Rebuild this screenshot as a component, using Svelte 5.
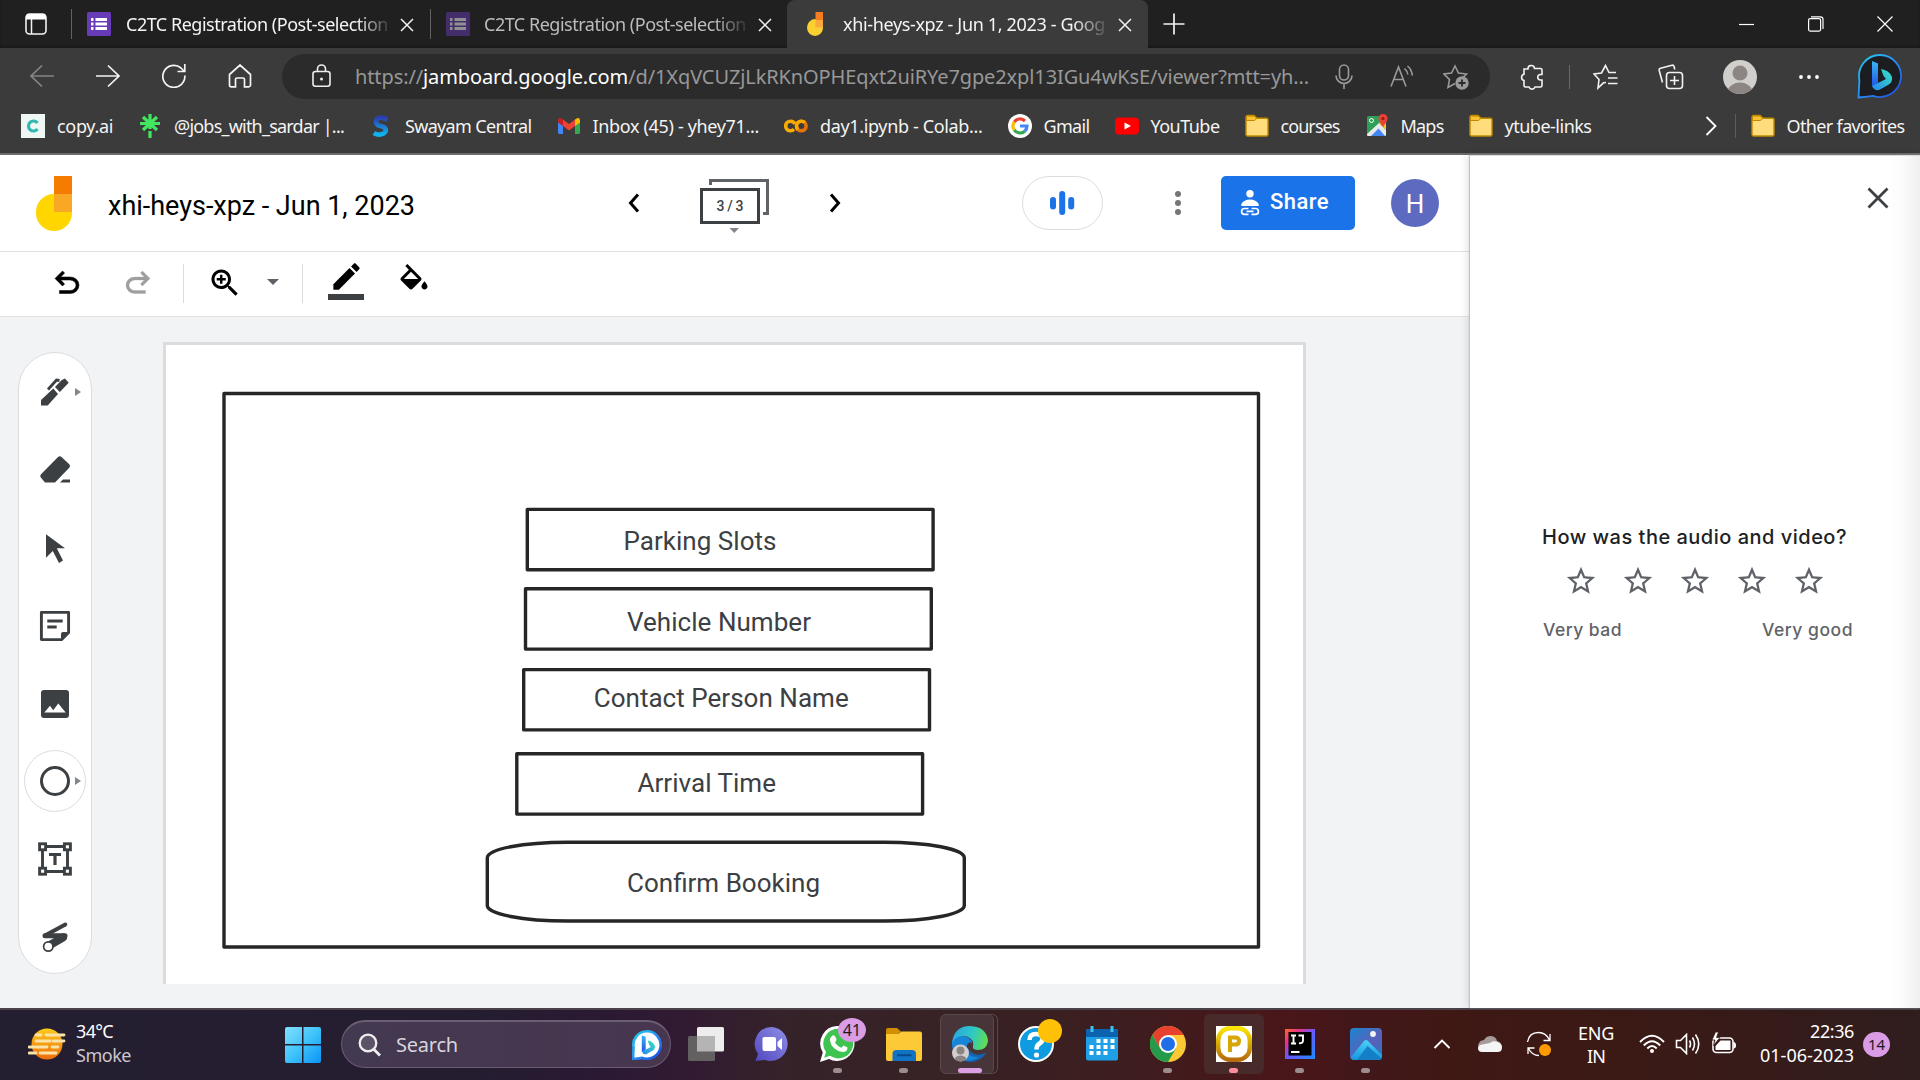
<script>
  // Spreads a label's letters so it fills the given width.
  function fit(node, width) {
    const natural = node.getBoundingClientRect().width;
    node.style.letterSpacing = `${(width - natural) / node.textContent.length}px`;
  }

  const tabs = [
    { title: 'C2TC Registration (Post-selection', dim: false },
    { title: 'C2TC Registration (Post-selection', dim: true },
  ];

  const bookmarks = [
    { icon: 'copy', text: 'copy.ai', w: 56 },
    { icon: 'tree', text: '@jobs_with_sardar |...', w: 170 },
    { icon: 'swayam', text: 'Swayam Central', w: 126.5 },
    { icon: 'gmail', text: 'Inbox (45) - yhey71...', w: 166.5 },
    { icon: 'colab', text: 'day1.ipynb - Colab...', w: 162.5 },
    { icon: 'google', text: 'Gmail', w: 46 },
    { icon: 'youtube', text: 'YouTube', w: 69 },
    { icon: 'folder', text: 'courses', w: 59 },
    { icon: 'maps', text: 'Maps', w: 43 },
    { icon: 'folder', text: 'ytube-links', w: 87 },
  ];

  const tools = ['pen', 'eraser', 'select', 'note', 'image', 'circle', 'text', 'laser'];

  const boxes = [
    { x: 527.3, y: 509.4, tx: 623.5, ty: 550, tw: 153, label: 'Parking Slots' },
    { x: 525.5, y: 588.8, tx: 627, ty: 631, tw: 184, label: 'Vehicle Number' },
    { x: 523.7, y: 669.6, tx: 593.7, ty: 707, tw: 255, label: 'Contact Person Name' },
    { x: 516.8, y: 753.8, tx: 637.5, ty: 792, tw: 138.5, label: 'Arrival Time' },
  ];

  const apps = [
    { name: 'taskview' },
    { name: 'chat' },
    { name: 'whatsapp', mark: 'dot' },
    { name: 'files', mark: 'dot' },
    { name: 'edge', mark: 'active' },
    { name: 'help' },
    { name: 'calendar' },
    { name: 'chrome', mark: 'dot' },
    { name: 'p', mark: 'alert' },
    { name: 'ij', mark: 'dot' },
    { name: 'photos', mark: 'dot' },
  ];
</script>

{#snippet bing(size)}
  <svg width={size} height={size} viewBox="0 0 46 46">
    <defs>
      <linearGradient id="bRing" x1="0" y1="0" x2="1" y2="1"><stop offset="0" stop-color="#1fd0ee" /><stop offset=".5" stop-color="#2b8df2" /><stop offset="1" stop-color="#1b48e0" /></linearGradient>
      <linearGradient id="bStem" x1="0" y1="0" x2="0" y2="1"><stop offset="0" stop-color="#37b8f5" /><stop offset="1" stop-color="#2251e8" /></linearGradient>
      <linearGradient id="bBowl" x1="1" y1="0" x2="0" y2="1"><stop offset="0" stop-color="#35e5c0" /><stop offset="1" stop-color="#2a86f0" /></linearGradient>
    </defs>
    <path d="M1.5 44.5 L2.4 27 A21 21 0 1 1 16 42.8 Q8 44 1.5 44.5Z" fill={size > 40 ? '#1c1d20' : '#fff'} stroke="url(#bRing)" stroke-width={size > 40 ? 1.8 : 4} />
    <path d="M15 8 L21 10.5 V30 L15 34Z" fill="url(#bStem)" />
    <path d="M24 16 Q32 17 35 24 Q36 29 31 32 L22 37 Q17 38 15 33 L29 26 L26.5 23Z" fill="url(#bBowl)" />
  </svg>
{/snippet}

{#snippet closeX(s)}
  <svg class="x" width={s} height={s} viewBox="0 0 14 14"><path d="M1 1 L13 13 M13 1 L1 13" fill="none" stroke="#f2f2f2" stroke-width="1.5" /></svg>
{/snippet}

{#snippet folder()}
  <svg width="24" height="24" viewBox="0 0 24 24"><path d="M1 20.5V3a1.5 1.5 0 0 1 1.500-1.500H9L12 4.300H21.500A1.500 1.500 0 0 1 23 5.800V20.500A1.500 1.500 0 0 1 21.500 22H2.500A1.500 1.500 0 0 1 1 20.500Z" fill="#ffdc7c" stroke="#c08a00" stroke-width="1.400" /><path d="M1.500 6.500V3A1 1 0 0 1 2.500 2H9L11.800 4.500L9.500 6.500Z" fill="#f9c12f" stroke="#c08a00" /></svg>
{/snippet}

<div class="screen">
  <div class="tabbar">
    <svg class="workspaces" width="22" height="22" viewBox="0 0 22 22"><rect x="1" y="1" width="20" height="20" rx="3.500" fill="none" stroke="#f2f2f2" stroke-width="1.600" /><path d="M1 6.500V4A3 3 0 0 1 4 1H18A3 3 0 0 1 21 4V6.500Z" fill="#fff" /><path d="M6.500 6V21" stroke="#f2f2f2" stroke-width="1.500" /></svg>
    {#each tabs as tab}
      <div class="tab" class:dim={tab.dim}>
        <svg class="favicon" width="24" height="24" viewBox="0 0 24 24"><rect width="24" height="24" rx="1.500" fill="#673ab7" /><path d="M4 7.500H6.500M4 12H6.500M4 16.500H6.500M8.500 7.500H20M8.500 12H20M8.500 16.500H20" stroke="#fff" stroke-width="2.800" /></svg>
        <div class="tab-title"><span use:fit={262}>{tab.title}</span></div>
        {@render closeX(14)}
      </div>
    {/each}
    <div class="tab active">
      <svg class="favicon" width="24" height="24" viewBox="0 0 24 24"><path d="M3 15.500A8.500 8.500 0 0 1 11.500 7H19V15.500A8 8.500 0 0 1 3 15.500Z" fill="#fbd132" /><path d="M11.500 0H19V8H11.500Z" fill="#f57c1f" /><path d="M11.500 8H19V15.500H11.500Z" fill="#fba93c" /></svg>
      <div class="tab-title"><span use:fit={262}>xhi-heys-xpz - Jun 1, 2023 - Goog</span></div>
      {@render closeX(14)}
    </div>
    <svg class="newtab" width="22" height="22" viewBox="0 0 22 22"><path d="M11 .5V21.500M.5 11H21.500" stroke="#f2f2f2" stroke-width="1.700" /></svg>
    <div class="window-buttons">
      <svg width="16" height="16" viewBox="0 0 16 16"><path d="M0 8.500H15" stroke="#fff" stroke-width="1.200" /></svg>
      <svg width="16" height="16" viewBox="0 0 16 16"><rect x=".6" y="2.600" width="12" height="12.500" rx="1.500" fill="none" stroke="#fff" stroke-width="1.200" /><path d="M3 .8H12.500A2.500 2.500 0 0 1 15 3.300V13" fill="none" stroke="#fff" stroke-width="1.200" /></svg>
      <svg width="16" height="16" viewBox="0 0 16 16"><path d="M.5 .5L15.500 15.500M15.500 .5L.5 15.500" stroke="#fff" stroke-width="1.200" /></svg>
    </div>
  </div>

  <div class="navbar">
    <div class="nav-buttons">
      <svg width="24" height="24" viewBox="0 0 24 24"><path d="M24 12H1M12 1.500L1 12L12 22.500" /></svg>
      <svg width="24" height="24" viewBox="0 0 24 24"><path d="M0 12H23M12 1.500L23 12L12 22.500" /></svg>
      <svg width="24" height="24" viewBox="0 0 24 24"><path d="M22.800 11.500A11 11 0 1 1 19 4L22.500 7.500M22.800 0V7.500H15.500" /></svg>
      <svg width="24" height="24" viewBox="0 0 24 24"><path d="M1.500 10.500L12 1L22.500 10.500V21A1.800 1.800 0 0 1 20.700 22.800H16.500V15.500Q16.500 14 15 14H9Q7.500 14 7.500 15.500V22.800H3.300A1.800 1.800 0 0 1 1.500 21Z" /></svg>
    </div>
    <div class="address">
      <svg class="lock" width="20" height="24" viewBox="0 0 20 24"><rect x="1" y="7.500" width="17" height="14.800" rx="2.500" fill="none" stroke="#eee" stroke-width="1.600" /><path d="M5.500 7.500V5a4 4 0 0 1 8 0V7.500" fill="none" stroke="#eee" stroke-width="1.600" /><circle cx="9.500" cy="15" r="1.500" fill="#eee" /></svg>
      <div class="url"><span use:fit={954}>https://<b>jamboard.google.com</b>/d/1XqVCUZjLkRKnOPHEqxt2uiRYe7gpe2xpl13IGu4wKsE/viewer?mtt=yh...</span></div>
      <div class="address-icons">
        <svg width="26" height="26" viewBox="0 0 26 26"><rect x="8.500" y="1" width="9" height="15" rx="4.500" /><path d="M5 11.500A8 8 0 0 0 21 11.500M13 19.500V25" /></svg>
        <svg class="read" width="26" height="26" viewBox="0 0 26 26"><path d="M2 22.500L9.500 3L17 22.500M4.800 15.500H14.200M15.500 4.500Q18.500 7 18.800 10.500M18.500 2Q22.800 5.500 23.300 11.500" /></svg>
        <svg width="26" height="26" viewBox="0 0 26 26"><path d="M12 19.500L5 23.500L6.500 15.500L1 10L8.500 9L12 2L15.500 9L23.500 10L20 13.500" /><circle cx="19" cy="19" r="6.700" fill="#9a9a9a" stroke="none" /><path d="M19 15.500V22.500M15.500 19H22.500" stroke="#2b2b2b" stroke-width="1.800" /></svg>
      </div>
    </div>
    <svg class="ext" width="24" height="26" viewBox="0 0 24 26"><path d="M4 5H8A3.200 3.200 0 1 1 14.500 4.500H20.500A1.500 1.500 0 0 1 22 6V10.500H20A2.800 2.800 0 0 0 20 16H22V21.500A1.500 1.500 0 0 1 20.500 23H15A3.200 3.200 0 0 1 9 23H5.500A1.500 1.500 0 0 1 4 21.500V16.500A3.200 3.200 0 0 1 4 10.300Z" fill="none" stroke="#f2f2f2" stroke-width="1.600" /></svg>
    <div class="nav-sep"></div>
    <svg class="favs" width="26" height="26" viewBox="0 0 26 26"><path d="M13 18.500L10.500 18.800L5 24L6 15.500L1 10L8.500 9L12.500 1.500L16 8.500H23M15 14H24.500M15 19.500H24.500" fill="none" stroke="#f2f2f2" stroke-width="1.600" /></svg>
    <svg class="collections" width="26" height="26" viewBox="0 0 26 26"><rect x="8.500" y="8.500" width="16" height="16" rx="3" fill="none" stroke="#f2f2f2" stroke-width="1.600" /><path d="M16.500 12V21M12 16.500H21M4.500 18.500L1.200 6.500Q.8 4.800 2.500 4.300L14 1.200Q15.500 .9 16 2.300L16.800 5.500" fill="none" stroke="#f2f2f2" stroke-width="1.600" /></svg>
    <svg class="profile" width="34" height="34" viewBox="0 0 34 34"><defs><clipPath id="pc"><circle cx="17" cy="17" r="17" /></clipPath></defs><g clip-path="url(#pc)"><rect width="34" height="34" fill="#d1cfcc" /><circle cx="17" cy="13" r="7.500" fill="#8b8683" /><ellipse cx="17" cy="34" rx="13" ry="11.500" fill="#8b8683" /></g></svg>
    <svg class="more" width="22" height="6" viewBox="0 0 22 6"><circle cx="3" cy="3" r="1.900" fill="#fff" /><circle cx="11" cy="3" r="1.900" fill="#fff" /><circle cx="19" cy="3" r="1.900" fill="#fff" /></svg>
    <div class="bing-btn">{@render bing(46)}</div>
  </div>

  <div class="bookmarks">
    {#each bookmarks as b}
      <div class="bookmark">
        {#if b.icon === 'folder'}
          {@render folder()}
        {:else if b.icon === 'copy'}
          <svg width="24" height="24" viewBox="0 0 24 24"><rect width="24" height="24" fill="#eef7f4" /><path d="M16.500 9A5 5 0 1 0 16.500 15" fill="none" stroke="#35b7b0" stroke-width="3.200" /></svg>
        {:else if b.icon === 'tree'}
          <svg width="24" height="24" viewBox="0 0 24 24"><path d="M12 0V15M2 9.500H22M5 3L19 16M19 3L5 16M12 17V24" stroke="#43e660" stroke-width="3.200" /></svg>
        {:else if b.icon === 'swayam'}
          <svg width="24" height="24" viewBox="0 0 24 24"><defs><linearGradient id="sw" x1="0" y1="0" x2="0" y2="1"><stop offset="0" stop-color="#2b3fae" /><stop offset="1" stop-color="#0fb5ee" /></linearGradient></defs><path d="M18.500 5.500Q12 2.500 8.500 4.500Q5 8 9 11L15 13Q19 16.500 14.500 19.500Q10 22 4.800 19" fill="none" stroke="url(#sw)" stroke-width="4.800" /></svg>
        {:else if b.icon === 'gmail'}
          <svg width="24" height="24" viewBox="0 0 24 24"><path d="M1 6V18.500A1.500 1.500 0 0 0 2.500 20H6V9.500Z" fill="#4285f4" /><path d="M23 6V18.500A1.500 1.500 0 0 1 21.500 20H18V9.500Z" fill="#34a853" /><path d="M18 5.500L20 4.200Q23 3.500 23 6.500V8.500L18 12Z" fill="#fbbc04" /><path d="M6 5.500L4 4.200Q1 3.500 1 6.500V8.500L6 12Z" fill="#c5221f" /><path d="M6 5.500L12 10L18 5.500V12L12 16.500L6 12Z" fill="#ea4335" /></svg>
        {:else if b.icon === 'colab'}
          <svg width="24" height="24" viewBox="0 0 24 24"><circle cx="6.500" cy="12" r="4.800" fill="none" stroke="#f9ab00" stroke-width="3.600" stroke-dasharray="24 6" stroke-dashoffset="-3.500" /><circle cx="17.300" cy="12" r="4.800" fill="none" stroke="#e8710a" stroke-width="3.600" /><path d="M20.700 8.600A4.800 4.800 0 0 0 13.900 15.400" fill="none" stroke="#f9ab00" stroke-width="3.600" /></svg>
        {:else if b.icon === 'google'}
          <svg width="24" height="24" viewBox="0 0 24 24"><circle cx="12" cy="12" r="12" fill="#fff" /><g fill="none" stroke-width="3.200"><path d="M17 7A7 7 0 0 0 6.300 8" stroke="#ea4335" /><path d="M6.300 8A7 7 0 0 0 6.300 16" stroke="#fbbc05" /><path d="M6.300 16A7 7 0 0 0 16.700 17.200" stroke="#34a853" /><path d="M16.700 17.200A7 7 0 0 0 19 12H12" stroke="#4285f4" /></g></svg>
        {:else if b.icon === 'youtube'}
          <svg width="24" height="24" viewBox="0 0 24 24"><rect x="0" y="3.500" width="24" height="17" rx="4" fill="#f00" /><path d="M9.500 8.500L16 12L9.500 15.500Z" fill="#fff" /></svg>
        {:else}
          <svg width="24" height="24" viewBox="0 0 24 24"><defs><clipPath id="mapClip"><rect x="2" y="2" width="19" height="20" rx="1.500" /></clipPath></defs><g clip-path="url(#mapClip)"><rect width="24" height="24" fill="#2f9e57" /><path d="M2 22L12 11L22 22Z" fill="#4285f4" /><path d="M14 9L22 17V22H20L13.500 14.500L6 22H2V20Z" fill="#e9e9e9" /><path d="M14 9L16 7H22V17Z" fill="#fbc02d" /></g><circle cx="6.500" cy="6.500" r="2" fill="none" stroke="#fff" /><path d="M18 13Q13.500 7 13.500 4.500A4.500 4.500 0 0 1 22.500 4.500Q22.500 7 18 13Z" fill="#ea4335" /><circle cx="18" cy="4.500" r="1.600" fill="#8c1d14" /></svg>
        {/if}
        <div class="bm-label" style:width="{b.w}px"><span use:fit={b.w}>{b.text}</span></div>
      </div>
    {/each}
    <svg class="bm-more" width="12" height="20" viewBox="0 0 12 20"><path d="M1.500 1L10.500 10L1.500 19" fill="none" stroke="#fff" stroke-width="1.800" /></svg>
    <div class="bm-sep"></div>
    <div class="bookmark">
      {@render folder()}
      <div class="bm-label"><span use:fit={118}>Other favorites</span></div>
    </div>
  </div>

  <div class="page">
    <div class="app">
      <header>
        <svg class="logo" width="36" height="56" viewBox="0 0 36 56"><path d="M0 36A18 18 0 0 1 18 18H36V37A18 18 0 0 1 0 37Z" fill="#ffd600" /><rect x="18" width="18" height="18" fill="#f57c00" /><rect x="18" y="18" width="18" height="18" fill="#f9a825" /></svg>
        <h1><span use:fit={307}>xhi-heys-xpz - Jun 1, 2023</span></h1>
        <svg class="prev" width="14" height="20" viewBox="0 0 14 20"><path d="M11 1.500L3.500 10L11 18.500" fill="none" stroke="#000" stroke-width="3" /></svg>
        <div class="frames">
          <svg width="70" height="56" viewBox="0 0 70 56"><path d="M10.500 6V1.500H67.500V34.500H63" fill="none" stroke="#5f6368" stroke-width="3" /><rect x="1.500" y="10.500" width="57" height="33" fill="#fff" stroke="#3c4043" stroke-width="3" /><path d="M29.500 49H39L34.200 54Z" fill="#80868b" /><text x="16.500" y="31.500" textLength="27">3 / 3</text></svg>
        </div>
        <svg class="next" width="14" height="20" viewBox="0 0 14 20"><path d="M3 1.500L10.500 10L3 18.500" fill="none" stroke="#000" stroke-width="3" /></svg>
        <div class="audio">
          <svg width="26" height="26" viewBox="0 0 26 26"><g fill="#1a73e8"><rect x="1" y="7" width="6" height="12.500" rx="3" /><rect x="10.200" y="1" width="6" height="24" rx="3" /><rect x="19.200" y="7" width="6" height="12.500" rx="3" /></g></svg>
        </div>
        <svg class="kebab" width="8" height="26" viewBox="0 0 8 26"><g fill="#757575"><circle cx="4" cy="4" r="3" /><circle cx="4" cy="13" r="3" /><circle cx="4" cy="22" r="3" /></g></svg>
        <button class="share">
          <svg width="20" height="26" viewBox="0 0 20 26"><circle cx="10" cy="3.800" r="3.700" fill="#fff" /><path d="M1.300 16V14Q4 9.500 10 9.500Q16 9.500 18.700 14V16Z" fill="#fff" /><path d="M8.500 18.500H4.500A2.900 2.900 0 0 0 4.500 24.300H8.500M11.500 18.500H15.500A2.900 2.900 0 0 1 15.500 24.300H11.500M6.500 21.400H13.500" fill="none" stroke="#fff" stroke-width="1.700" /></svg>
          <span use:fit={59}>Share</span>
        </button>
        <div class="account">H</div>
      </header>

      <div class="edit-bar">
        <svg class="undo" width="36" height="36" viewBox="0 -960 960 960"><path d="M280-200v-80h284q63 0 109.500-40T720-420q0-60-46.500-100T564-560H312l104 104-56 56-200-200 200-200 56 56-104 104h252q97 0 166.500 63T800-420q0 94-69.500 157T564-200H280Z" stroke="#000" stroke-width="14" /></svg>
        <svg class="redo" width="36" height="36" viewBox="0 -960 960 960"><path transform="translate(960 0) scale(-1 1)" d="M280-200v-80h284q63 0 109.500-40T720-420q0-60-46.500-100T564-560H312l104 104-56 56-200-200 200-200 56 56-104 104h252q97 0 166.500 63T800-420q0 94-69.500 157T564-200H280Z" fill="#9e9e9e" stroke="#9e9e9e" stroke-width="8" /></svg>
        <div class="bar-sep first"></div>
        <svg class="zoom" width="36" height="36" viewBox="0 0 24 24"><path d="M15.500 14h-.79l-.28-.27C15.410 12.590 16 11.110 16 9.500 16 5.910 13.090 3 9.500 3S3 5.910 3 9.500 5.910 16 9.500 16c1.610 0 3.090-.59 4.230-1.570l.27.28v.79l5 4.990L20.490 19l-4.990-5zm-6 0C7.010 14 5 11.990 5 9.500S7.010 5 9.500 5 14 7.010 14 9.500 11.990 14 9.500 14z" /><path d="M9.500 6.500V12.500M6.500 9.500H12.500" stroke="#000" stroke-width="1.600" /></svg>
        <svg class="caret" width="12" height="6" viewBox="0 0 12 6"><path d="M0 0H12L6 6Z" fill="#5f6368" /></svg>
        <div class="bar-sep second"></div>
        <div class="pen-color">
          <svg width="35" height="35" viewBox="0 0 24 24"><path d="M3 17.250V21h3.750L17.810 9.940l-3.750-3.750L3 17.250z" /><path d="M20.710 7.040c.39-.39.39-1.020 0-1.410l-2.340-2.340c-.39-.39-1.020-.39-1.410 0l-1.830 1.830 3.750 3.750 1.830-1.830z" /></svg>
          <div class="swatch"></div>
        </div>
        <svg class="fill" width="36" height="36" viewBox="0 0 24 24"><path d="M16.560 8.940L7.620 0 6.210 1.410l2.380 2.380-5.150 5.150c-.59.59-.59 1.540 0 2.120l5.500 5.500c.29.29.68.44 1.060.44s.77-.15 1.060-.44l5.500-5.500c.59-.58.59-1.530 0-2.120zM5.210 10L10 5.210 14.790 10H5.210zM19 11.500s-2 2.170-2 3.500c0 1.100.9 2 2 2s2-.9 2-2c0-1.330-2-3.500-2-3.500z" /></svg>
      </div>

      <main>
        <nav class="rail">
          {#each tools as t}
            <div class="tool" class:current={t === 'circle'}>
              <svg width="36" height="36" viewBox="0 0 36 36" fill="#3c4043">
                {#if t === 'pen'}
                  <path d="M4 31.500V26L16.300 14.500L21 20L10.700 31.500ZM18 13L24.800 6L28 4.500L31.700 8.700L22.800 18Z" /><path d="M11 15.500L19.500 6L22.500 6.500" fill="none" stroke="#3c4043" stroke-width="2.800" />
                {:else if t === 'eraser'}
                  <path d="M3.800 22.500L20 6Q22.500 3 25 5.500L32 12Q34 14 32 16L18 30.500H8L3.800 25.500Q2.600 24 3.800 22.500ZM23 30.500L26 27.500H33V30.500Z" />
                {:else if t === 'select'}
                  <path d="M9 4.200L28 18.300H19.800L26 30.500L22 33L15.800 21L9 27.800Z" />
                {:else if t === 'note'}
                  <path d="M4.400 4.400H31.600V24.500L24.500 31.600H4.400Z" fill="none" stroke="#3c4043" stroke-width="2.900" stroke-linejoin="round" /><path d="M24 32V26Q24 24 26 24H32Z" /><path d="M10.300 13H25.700M10.300 19H19.700" stroke="#3c4043" stroke-width="2.900" />
                {:else if t === 'image'}
                  <rect x="4" y="4" width="28" height="28" rx="3" /><path d="M7.300 26.500L13 19.700L16.200 24.200L21.300 17.600L28.700 26.500Z" fill="#fff" />
                {:else if t === 'circle'}
                  <circle cx="18" cy="18" r="13.500" fill="none" stroke="#3c4043" stroke-width="3" />
                {:else if t === 'text'}
                  <g fill="none" stroke="#3c4043" stroke-width="2.900"><path d="M10 5.500H26M10 30.500H26M5.500 10V26M30.500 10V26" /><rect x="2.600" y="2.800" width="6" height="6" /><rect x="27.400" y="2.800" width="6" height="6" /><rect x="2.600" y="27.200" width="6" height="6" /><rect x="27.400" y="27.200" width="6" height="6" /><path d="M12 13.500H24M18 13.500V24" stroke-width="3.200" /></g>
                {:else}
                  <g fill="none" stroke="#3c4043" stroke-linecap="round"><path d="M8 16.500L28.300 5.500" stroke-width="4" /><path d="M8 16.800H28" stroke-width="5" /><path d="M11.300 27L26 18.500" stroke-width="8" /></g><circle cx="11.300" cy="27.500" r="5.500" /><circle cx="11.300" cy="27.500" r="3.800" fill="#fff" />
                {/if}
              </svg>
              {#if t === 'pen' || t === 'circle'}<i class="more-arrow"></i>{/if}
            </div>
          {/each}
        </nav>
        <div class="board">
          <svg width="1137" height="639" viewBox="166 345 1137 639">
            <g fill="none" stroke="#262626" stroke-width="3.400" stroke-linejoin="round">
              <rect x="224" y="393.500" width="1034.500" height="553.500" />
              {#each boxes as b}<rect x={b.x} y={b.y} width="405.800" height="60.300" />{/each}
              <rect x="487.300" y="842.200" width="477" height="78.800" rx="80" ry="15.500" />
            </g>
            {#each boxes as b}<text x={b.tx} y={b.ty} textLength={b.tw}>{b.label}</text>{/each}
            <text x="627" y="892" textLength="193">Confirm Booking</text>
          </svg>
        </div>
      </main>
    </div>

    <aside>
      <svg class="close" width="22" height="22" viewBox="0 0 22 22"><path d="M1.500 1.500L20.500 20.500M20.500 1.500L1.500 20.500" stroke="#3c4043" stroke-width="2.800" /></svg>
      <div class="question"><span use:fit={305}>How was the audio and video?</span></div>
      <div class="stars">
        {#each Array(5) as _}
          <svg width="34" height="34" viewBox="0 0 24 24" fill="#5f6368"><path d="M22 9.240l-7.190-.62L12 2 9.190 8.630 2 9.240l5.460 4.730L5.820 21 12 17.270 18.180 21l-1.630-7.030L22 9.240zM12 15.400l-3.760 2.270 1-4.280-3.320-2.880 4.380-.38L12 6.100l1.710 4.040 4.380.38-3.320 2.880 1 4.280L12 15.400z" /></svg>
        {/each}
      </div>
      <div class="scale"><span use:fit={79}>Very bad</span><span use:fit={91}>Very good</span></div>
    </aside>
  </div>

  <footer>
    <svg class="weather" width="38" height="32" viewBox="0 0 38 32"><defs><linearGradient id="sun" x1="0" y1="0" x2="0" y2="1"><stop offset="0" stop-color="#fccb1b" /><stop offset="1" stop-color="#ef6c0c" /></linearGradient></defs><circle cx="19" cy="16" r="15.500" fill="url(#sun)" /><path d="M8 7H13M18 7H36M8 13H22M25 13H36M1 19H19M24 19H30M1 25H8M12 25H28" stroke="#fbe3a8" stroke-width="2.800" stroke-linecap="round" /></svg>
    <div class="weather-text"><div><span use:fit={37}>34°C</span></div><div class="muted"><span use:fit={55}>Smoke</span></div></div>
    <svg class="start" width="36" height="36" viewBox="0 0 36 36"><defs><linearGradient id="win" x1="0" y1="0" x2="1" y2="1"><stop offset="0" stop-color="#84e0fd" /><stop offset=".5" stop-color="#3fc3fb" /><stop offset="1" stop-color="#0b93f5" /></linearGradient></defs><path d="M2 0H17V17H0V2Q0 0 2 0ZM18.500 0H34Q36 0 36 2V17H18.500ZM0 18.500H17V36H2Q0 36 0 34ZM18.500 18.500H36V34Q36 36 34 36H18.500Z" fill="url(#win)" /></svg>
    <div class="search">
      <svg width="24" height="24" viewBox="0 0 24 24"><circle cx="10" cy="10" r="8.300" fill="#ffffff22" stroke="#eee" stroke-width="2.300" /><path d="M15.500 16L22 22.500" stroke="#eee" stroke-width="2.800" /></svg>
      <div class="search-label"><span use:fit={62}>Search</span></div>
      {@render bing(30)}
    </div>
    <div class="apps">
      {#each apps as a}
        <div class="slot {a.name}">
          <svg width="36" height="36" viewBox="0 0 36 36">
            {#if a.name === 'taskview'}
              <rect x="9" y="1" width="27" height="24.500" rx="1.500" fill="#ededed" /><rect x="0" y="10" width="27" height="25" rx="1.500" fill="#626060" /><path d="M9 10H27V25.500H9Z" fill="#b5b4b4" />
            {:else if a.name === 'chat'}
              <defs><linearGradient id="ch" x1="1" y1="0" x2="0" y2="1"><stop offset="0" stop-color="#9090e8" /><stop offset="1" stop-color="#5147bd" /></linearGradient></defs><path d="M18 1A17 17 0 1 1 11 34L1.500 35L4 28A17 17 0 0 1 18 1Z" fill="url(#ch)" /><rect x="8.500" y="11" width="13.500" height="14" rx="2" fill="#fff" /><path d="M23.500 16L28 12V24L23.500 20Z" fill="#fff" />
            {:else if a.name === 'whatsapp'}
              <path d="M18.500 0A17.500 17.500 0 1 1 9 33L0 36L2.800 26.500A17.500 17.500 0 0 1 18.500 0Z" fill="#fff" /><path d="M18.500 2.800A14.800 14.800 0 1 1 10 29.800L4.200 31.700L6 26A14.800 14.800 0 0 1 18.500 2.800Z" fill="#3fc351" /><path d="M12.500 9.500Q14.500 8.500 15.500 11L16.500 13.500Q16.500 14.500 15 16.200Q17.500 20.500 21.500 21.800L23.500 19.500L27.500 21.500Q27.500 26 22.500 26Q11.500 24 9.800 14Q10 11 12.500 9.500Z" fill="#fff" />
            {:else if a.name === 'files'}
              <path d="M0 8V4Q0 2 2 2H11L15 5.500L12 8Z" fill="#d18e00" /><path d="M0 8H12L15.500 5.500H34Q36 5.500 36 7.500V33Q36 35 34 35H2Q0 35 0 33Z" fill="#fdc936" /><path d="M6.500 35V28Q6.500 24 10.500 24H26Q30 24 30 28V35Z" fill="#1073c4" /><path d="M12 29.200H24.500" stroke="#0a4a86" stroke-width="2" stroke-linecap="round" />
            {:else if a.name === 'edge'}
              <defs><linearGradient id="e1" x1="0" y1=".3" x2="1" y2=".5"><stop offset="0" stop-color="#2aa6de" /><stop offset=".55" stop-color="#2fc8c5" /><stop offset="1" stop-color="#62de52" /></linearGradient></defs><path d="M0 17A18 18 0 0 0 23 35.200Q31 33 34.500 26.500Q24 31.500 18 25Q12 15 0 17Z" fill="#1264b4" /><path d="M0 18Q0 10 9 10Q19 10 20.500 18Q18 14 15 19Q13 32 27 31Q16 38 8 32Q0 27 0 18Z" fill="#1785d8" /><path d="M0 17Q2 0 18 0Q35 1 36 15Q35 24 25.500 24Q20 23.500 21 20.500Q23 14 15 10.500Q5 8 0 17Z" fill="url(#e1)" /><circle cx="8.500" cy="27" r="8.500" fill="#d2cfcc" /><circle cx="8.500" cy="24.500" r="4" fill="#8a8583" /><path d="M2.500 33Q4 29.500 8.500 29.500Q13 29.500 14.500 33Q8.500 38 2.500 33Z" fill="#8a8583" />
            {:else if a.name === 'help'}
              <circle cx="18" cy="18" r="17" fill="#0f9be0" stroke="#fff" stroke-width="2" /><path d="M11.500 14Q11.500 8 18 8Q24.500 8 24.500 13Q24.500 16 21 18Q18.500 19.500 18.500 23.500" fill="none" stroke="#fff" stroke-width="4.500" /><circle cx="18.500" cy="29" r="2.600" fill="#fff" />
            {:else if a.name === 'calendar'}
              <rect x="2" y="3" width="32" height="31.500" rx="2" fill="#1e9fe8" /><path d="M2 11V5Q2 3 4 3H32Q34 3 34 5V11Z" fill="#0d62ae" /><path d="M8 0V6M28 0V6" stroke="#3dc3f2" stroke-width="3" /><g fill="#fff"><rect x="12.500" y="13" width="4" height="4" /><rect x="19.500" y="13" width="4" height="4" /><rect x="26.500" y="13" width="4" height="4" /><rect x="5.500" y="19" width="4" height="4" /><rect x="12.500" y="19" width="4" height="4" /><rect x="19.500" y="19" width="4" height="4" /><rect x="26.500" y="19" width="4" height="4" /><rect x="5.500" y="25" width="4" height="4" /><rect x="12.500" y="25" width="4" height="4" /><rect x="19.500" y="25" width="4" height="4" /></g>
            {:else if a.name === 'chrome'}
              <circle cx="18" cy="18" r="18" fill="#fcc934" /><path d="M2.400 9A18 18 0 0 1 33.600 9H18L10.200 22.500Z" fill="#e8412f" /><path d="M2.400 9A18 18 0 0 0 18 36L25.800 22.500H10.200Z" fill="#259a4b" /><circle cx="18" cy="18" r="9" fill="#fff" /><circle cx="18" cy="18" r="7" fill="#1f6fe8" />
            {:else if a.name === 'p'}
              <defs><linearGradient id="gold" x1="0" y1="0" x2="0" y2="1"><stop offset="0" stop-color="#fbe500" /><stop offset="1" stop-color="#b56a0c" /></linearGradient></defs><rect width="36" height="36" fill="#fff" /><rect x="2.200" y="2.200" width="31.600" height="31.600" rx="12" fill="none" stroke="url(#gold)" stroke-width="4.400" /><path d="M14 26V11.500H19.500Q23 12 23 15Q23 18.500 19.500 18.500H14" fill="none" stroke="#d9a705" stroke-width="4" />
            {:else if a.name === 'ij'}
              <defs><linearGradient id="ijg" x1="0" y1="0" x2="1" y2="1"><stop offset="0" stop-color="#fc6a2b" /><stop offset=".25" stop-color="#e5318a" /><stop offset=".5" stop-color="#6b57ff" /><stop offset="1" stop-color="#1a8cff" /></linearGradient></defs><rect x="3" y="3" width="30" height="30" fill="url(#ijg)" /><rect x="6.500" y="6" width="23" height="23.500" fill="#000" /><path d="M9 9.500H14M9 17.500H14M11.500 9.500V17.500M16.500 9.500H21V14.500Q21 17.500 17 17.300M9 26H17.500" fill="none" stroke="#fff" stroke-width="1.900" />
            {:else}
              <defs><linearGradient id="ph" x1="0" y1="0" x2="1" y2="1"><stop offset="0" stop-color="#1c86d0" /><stop offset=".6" stop-color="#5b5fb8" /><stop offset="1" stop-color="#1d7fc4" /></linearGradient><linearGradient id="ph2" x1="0" y1="0" x2="0" y2="1"><stop offset="0" stop-color="#4ad1f8" /><stop offset="1" stop-color="#1795dd" /></linearGradient></defs><rect x="2" y="2" width="32" height="32" rx="4" fill="url(#ph)" /><path d="M3 31L16 15Q18 13 20 15L34 29V30Q34 34 30 34H6Q3.500 34 3 31Z" fill="url(#ph2)" /><path d="M19.500 20L33 32Q32 34 30 34H9Z" fill="#147fc6" /><circle cx="25" cy="8" r="2.900" fill="#f4f4f4" />
            {/if}
          </svg>
          {#if a.name === 'whatsapp'}<div class="badge">41</div>{/if}
          {#if a.name === 'help'}<div class="badge plain"></div>{/if}
          {#if a.mark}<i class="mark {a.mark}"></i>{/if}
        </div>
      {/each}
    </div>
    <div class="tray">
      <svg class="up" width="18" height="12" viewBox="0 0 18 12"><path d="M1.500 10L9 2.500L16.500 10" fill="none" stroke="#fff" stroke-width="1.900" /></svg>
      <svg class="cloud" width="26" height="18" viewBox="0 0 26 18"><path d="M1 11Q2 5 7 5Q9 1 14 1Q19 1.500 20 6Q24.500 7 25 12L12 14Z" fill="#a79b99" /><path d="M5 17Q1 17 1 13Q1 10 5 9.500L13 8Q16 5 20.500 7Q25 8.500 25 12.500Q25 17 20.500 17Z" fill="#f5f5f5" /></svg>
      <svg class="sync" width="26" height="26" viewBox="0 0 26 26"><path d="M1.500 11Q3 1.500 12.500 1.500Q20 1.500 23.500 9M24 3V9.500H17.500M2 23V17H8.500M2.500 17.500Q6 24.500 13 24.500" fill="none" stroke="#fff" stroke-width="1.300" /><circle cx="19" cy="19" r="6" fill="#ff9a00" /></svg>
      <div class="lang"><div><span use:fit={36}>ENG</span></div><div><span use:fit={18}>IN</span></div></div>
      <svg class="wifi" width="26" height="20" viewBox="0 0 26 20"><g fill="none" stroke="#fff" stroke-width="1.900"><path d="M1 8Q13-4.500 25 8M4.800 11.500Q13 3 21.200 11.500M8.300 14.500Q13 9.500 17.700 14.500" /></g><circle cx="13" cy="17" r="2" fill="#fff" /></svg>
      <svg class="volume" width="26" height="22" viewBox="0 0 26 22"><path d="M1.500 7.500H5.500L11.500 1.500V20.500L5.500 14.500H1.500ZM14.500 7.500Q16.500 11 14.500 14.500M17.500 4.500Q21.500 11 17.500 17.500M20.500 1.500Q27 11 20.500 20.500" fill="none" stroke="#fff" stroke-width="1.600" /></svg>
      <svg class="battery" width="26" height="22" viewBox="0 0 26 22"><rect x="2" y="6" width="20" height="14.500" rx="3.500" fill="none" stroke="#fff" stroke-width="1.600" /><path d="M22.500 10Q25 10 25 13.500Q25 16.500 22.500 16.500Z" fill="#fff" /><path d="M4.500 14L9.500 8.500H19.500V18H4.500Z" fill="#fff" /><path d="M4.500 0L1 8H4L2.500 13.500L9 5.500H5.500L7.500 0Z" fill="#fff" stroke="#3a1a17" stroke-width=".8" /></svg>
      <div class="clock"><div><span use:fit={44}>22:36</span></div><div><span use:fit={94}>01-06-2023</span></div></div>
      <div class="count">14</div>
    </div>
  </footer>
</div>

<style>
  :global(body) { margin: 0; overflow: hidden; }
  svg { display: block; flex: none; }
  .screen { width: 1920px; height: 1080px; display: flex; flex-direction: column; font-family: "Noto Sans", "Open Sans", sans-serif; font-size: 18px; overflow: hidden; }
  span { white-space: nowrap; display: inline-block; }

  .tabbar { height: 48px; background: #202020; display: flex; align-items: center; box-shadow: inset 0 -2px 2px #1a1a1a; }
  .workspaces { margin-left: 25px; margin-right: 24px; }
  .tab { display: flex; align-items: center; width: 359px; height: 30px; box-sizing: border-box; border-left: 1px solid #626262; }
  .tab .favicon { margin-left: 15px; }
  .tab-title { width: 262px; margin-left: 15px; color: #f4f4f4; line-height: 24px; mask-image: linear-gradient(90deg, #000 88%, #0002 100%); }
  .tab .x { margin: 2px 0 0 12px; }
  .tab.dim .favicon { opacity: .5; }
  .tab.dim .tab-title { color: #bcbcbc; }
  .tab.dim { width: 357px; }
  .tab.dim .tab-title { margin-left: 14px; }
  .tab.active { width: 361px; height: 48px; border: 0; background: #3b3b3b; border-radius: 8px 8px 0 0; }
  .tab.active .favicon { margin-left: 17px; }
  .tab.active .x { margin-left: 13px; }
  .newtab { margin-left: 15px; }
  .window-buttons { margin-left: auto; margin-right: 27px; display: flex; gap: 53px; }

  .navbar { height: 57px; background: #3b3b3b; display: flex; align-items: center; }
  .nav-buttons { display: flex; gap: 42px; margin-left: 30px; margin-top: -1px; fill: none; stroke: #f4f4f4; stroke-width: 1.700; }
  .nav-buttons svg:nth-child(1) { stroke: #858585; }
  .address { width: 1208px; height: 45px; margin-left: 30px; border-radius: 23px; background: #2b2b2b; display: flex; align-items: center; }
  .lock { margin-left: 30px; margin-top: -2px; }
  .url { margin-left: 23px; width: 954px; font-size: 20px; color: #989898; line-height: 28px; }
  .url b { font-weight: 400; color: #fff; }
  .address-icons { display: flex; margin-left: 22px; gap: 28px; fill: none; stroke: #9a9a9a; stroke-width: 1.600; }
  .read { margin-left: 4px; }
  .ext { margin-left: 30px; }
  .nav-sep { width: 1px; height: 24px; background: #686868; margin-left: 25px; }
  .favs { margin-left: 23px; }
  .collections { margin-left: 39px; }
  .profile { margin-left: 39px; }
  .more { margin-left: 41px; }
  .bing-btn { margin-left: 37px; margin-top: -1px; }

  .bookmarks { height: 42px; padding: 0 0 6px 21px; background: #3b3b3b; border-bottom: 2px solid #6b6b6b; display: flex; align-items: center; gap: 25px; }
  .bookmark { display: flex; align-items: center; gap: 12px; color: #f4f4f4; }
  .bm-label { line-height: 26px; white-space: nowrap; margin-top: -1px; }
  .bm-more { margin-left: 88px; }
  .bm-sep { width: 1px; height: 24px; background: #5c5c5c; margin: 0 -10px 0 -7px; }

  .page { height: 853px; display: flex; }
  .app { width: 1470px; display: flex; flex-direction: column; }
  header { height: 96px; border-bottom: 1px solid #e0e0e0; display: flex; align-items: center; background: #fff; }
  .logo { margin: 2px 0 0 36px; }
  h1 { margin: 6px 0 0 36px; width: 308px; font: 400 27px/36px Roboto, sans-serif; color: #000; }
  .prev { margin-left: 211px; }
  .frames { margin-left: 59px; width: 70px; height: 56px; margin-top: 7px; }
  .frames text { font: 500 14px Roboto, sans-serif; fill: #3c4043; }
  .next { margin-left: 58px; }
  .audio { margin-left: 180px; box-sizing: border-box; width: 81px; height: 54px; border: 1px solid #dadce0; border-radius: 27px; display: flex; align-items: center; justify-content: center; }
  .audio svg { margin-right: 2px; }
  .kebab { margin-left: 71px; }
  .share { margin-left: 39px; width: 134px; height: 54px; border: 0; border-radius: 5px; background: #1a73e8; display: flex; align-items: center; padding: 0 0 0 19px; font: 500 22px Roboto, sans-serif; color: #fff; }
  .share span { margin-left: 10px; margin-top: -4px; }
  .share svg { margin-top: -1px; }
  .account { margin-left: 36px; width: 48px; height: 48px; border-radius: 50%; background: #5c6bc0; color: #fff; font: 400 26px/50px Roboto, sans-serif; text-align: center; }

  .edit-bar { height: 64px; border-bottom: 1px solid #e0e2e4; background: #fff; display: flex; align-items: flex-start; }
  .undo { margin: 13px 0 0 49px; }
  .redo { margin: 13px 0 0 35px; }
  .bar-sep { width: 1px; height: 39px; margin-top: 12px; background: #dadce0; }
  .bar-sep.first { margin-left: 27px; }
  .zoom { margin: 13px 0 0 23px; }
  .caret { margin: 27px 0 0 24px; }
  .bar-sep.second { margin-left: 23px; }
  .pen-color { margin-left: 25px; width: 36px; display: flex; flex-direction: column; align-items: center; margin-top: 7px; }
  .swatch { width: 36px; height: 6px; background: #3c4043; }
  .fill { margin: 12px 0 0 32px; }

  main { flex: 1; background: #f1f3f4; display: flex; align-items: flex-start; }
  .rail { margin: 35px 0 0 18px; box-sizing: border-box; width: 74px; height: 622px; border: 1px solid #dadce0; border-radius: 37px; background: #fff; display: flex; flex-direction: column; }
  .tool { position: relative; flex: none; height: 77.900px; display: flex; align-items: center; justify-content: center; }
  .current::before { content: ""; position: absolute; left: 5px; top: 8px; width: 60px; height: 60px; border: 1px solid #dadce0; border-radius: 50%; }
  .more-arrow { position: absolute; left: 56px; top: 34.500px; border-left: 6px solid #80868b; border-top: 4px solid transparent; border-bottom: 4px solid transparent; }
  .board { margin: 25px 0 0 71px; border: 3px solid #dadce0; border-bottom: 0; background: #fff; height: 639px; }
  .board text { font: 400 26px Roboto, sans-serif; fill: #3c4043; }

  aside { position: relative; width: 450px; box-sizing: border-box; background: linear-gradient(90deg, #fff 93%, #fbfbfb 96%, #efefef 100%); box-shadow: -1px 0 1px #bfc3c6, -3px 0 8px #0000001c; border-top: 1px solid #dcdcdc; display: flex; flex-direction: column; font-family: Inter, sans-serif; }
  .close { margin: 31px 0 0 397px; }
  .question { margin: 314px 0 0 72px; font: 500 20px/28px Inter, sans-serif; color: #202124; height: 28px; }
  .stars { display: flex; gap: 23px; margin: 13px 0 0 94px; }
  .scale { display: flex; justify-content: space-between; width: 310px; margin: 20px 0 0 73px; font: 500 17.500px/24px Inter, sans-serif; color: #5f6368; }

  footer { height: 70px; border-top: 2px solid #4b4148; background: linear-gradient(90deg, #241f30 0, #241d30 480px, #2b1934 610px, #321b32 690px, #35222a 780px, #372224 950px, #3c1e20 1100px, #491619 1290px, #42171a 1360px, #3f1814 1450px, #3a1a16 1650px, #301d1e 1920px); display: flex; align-items: center; color: #fff; }
  .weather { margin: -2px 0 0 28px; }
  .weather-text { margin: -4px 0 0 10px; width: 60px; line-height: 24px; }
  .weather-text .muted { color: #cbc8cf; }
  .start { margin: -1px 0 0 149px; }
  .search { box-sizing: border-box; margin: -2px 0 0 20px; width: 330px; height: 48px; border-radius: 24px; border: 1px solid #6a5a72; border-top: 2px solid #6b5f74; background: linear-gradient(90deg, #433951, #48364f); display: flex; align-items: center; padding-left: 16px; }
  .search-label { margin-left: 14px; width: 236px; font-size: 20px; color: #d9d4dc; }
  .apps { display: flex; margin-left: 2px; }
  .slot { position: relative; width: 66px; height: 60px; display: flex; align-items: center; justify-content: center; margin-top: -2px; }
  .slot.edge::before { content: ""; position: absolute; z-index: 0; left: 3px; top: 0; width: 52px; height: 58px; border: 1px solid #5a494b; border-radius: 6px; background: #483539; }
  .slot.edge::after { content: ""; position: absolute; left: 53px; top: 0; width: 7px; height: 58px; border: solid #5a494b; border-width: 1px 1px 1px 0; border-radius: 0 6px 6px 0; }
  .slot.p::before { content: ""; position: absolute; left: 3px; top: 0; width: 60px; height: 60px; border-radius: 6px; background: #482a2b; }
  .slot svg { position: relative; }
  .mark { position: absolute; bottom: 1px; left: 28px; width: 9px; height: 5px; border-radius: 3px; background: #9b8c8e; }
  .mark.active { left: 21px; width: 24px; background: #dca0e6; }
  .mark.alert { background: #ff8d9b; }
  .badge { position: absolute; left: 33px; top: 4px; width: 28px; height: 24px; border-radius: 50%; background: #d99ce5; color: #1b1b1b; font-size: 16px; line-height: 24px; text-align: center; }
  .badge.plain { left: 35px; top: 5px; width: 24px; background: #ffc107; }
  .tray { display: flex; align-items: center; }
  .up { margin: -3px 0 0 34px; }
  .cloud { margin: -2px 0 0 26px; }
  .sync { margin: -2px 0 0 23px; }
  .lang { margin: 0 0 0 24px; width: 40px; text-align: center; line-height: 23px; }
  .wifi { margin: -2px 0 0 23px; }
  .volume { margin: -2px 0 0 10px; }
  .battery { margin: -4px 0 0 10px; }
  .clock { margin: -4px 0 0 21px; width: 96px; text-align: right; line-height: 24px; }
  .count { margin: -1px 0 0 9px; width: 27px; height: 25px; border-radius: 13px; background: #d99ce5; color: #1b1b1b; font-size: 15px; line-height: 25px; text-align: center; }
</style>
